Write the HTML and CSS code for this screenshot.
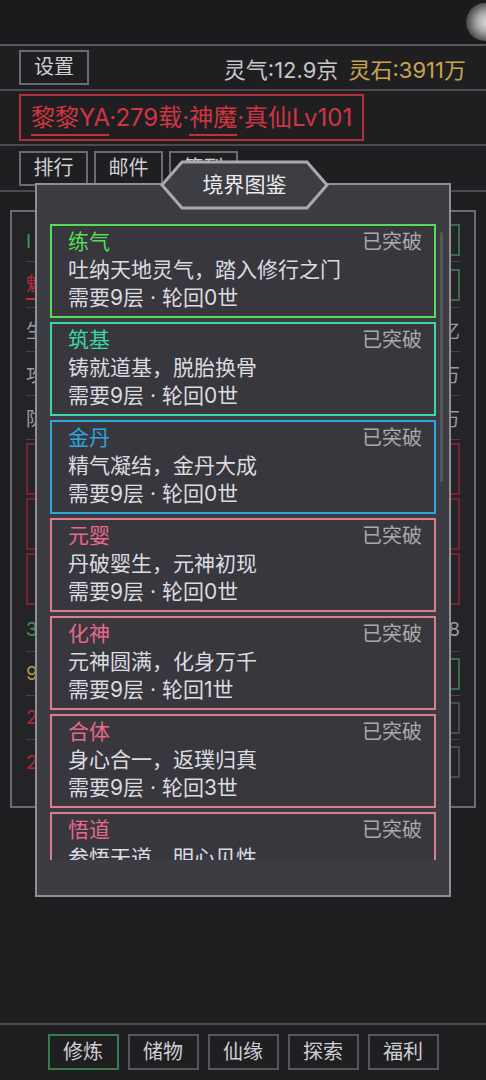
FILE: index.html
```html
<!DOCTYPE html>
<html lang="zh-CN">
<head>
    <meta charset="UTF-8">
    <meta name="viewport" content="width=device-width, initial-scale=1.0">
    <title>境界图鉴</title>
    <link rel="stylesheet" href="styles.css">
</head>
<body>

    <div class="app">
        <!-- Top bar -->
        <div class="topbar">
            <div class="orb"></div>
        </div>

        <!-- Resources -->
        <div class="row res-row">
            <div class="btn">设置</div>
            <div class="res">
                <span class="qi">灵气:12.9京</span>
                <span class="stone">灵石:3911万</span>
            </div>
        </div>

        <!-- Player title -->
        <div class="row name-row">
            <div class="name-box">
                <span class="ul">黎黎YA</span>·279载·<span class="ul">神魔</span>·真仙Lv101
            </div>
        </div>

        <!-- Tabs -->
        <div class="row tab-row">
            <div class="btn">排行</div>
            <div class="btn">邮件</div>
            <div class="btn">签到</div>
        </div>

        <!-- Main panel (behind modal) -->
        <div class="main">
            <div class="panel">
                <div class="prow">
                    <span class="green">I 练气九层</span>
                    <span class="mini-box green-box"></span>
                </div>
                <div class="prow tall">
                    <span class="red ul">魅力</span>
                    <span class="mini-box green-box"></span>
                </div>
                <div class="prow"><span>生命</span><span>12.3亿</span></div>
                <div class="prow"><span>攻击</span><span>45.6万</span></div>
                <div class="prow"><span>防御</span><span>23.1万</span></div>
                <div class="rbox"></div>
                <div class="rbox"></div>
                <div class="rbox"></div>
                <div class="prow"><span class="green">3</span><span>8</span></div>
                <div class="prow"><span class="gold">9</span><span class="mini-box green-box"></span></div>
                <div class="prow"><span class="red">2</span><span class="mini-box"></span></div>
                <div class="prow last"><span class="red">2</span><span class="mini-box"></span></div>
            </div>
        </div>

        <!-- Bottom nav -->
        <div class="nav">
            <div class="btn active">修炼</div>
            <div class="btn">储物</div>
            <div class="btn">仙缘</div>
            <div class="btn">探索</div>
            <div class="btn">福利</div>
        </div>

        <!-- Modal -->
        <div class="modal">
            <div class="modal-title">
                <svg width="169" height="50" viewBox="0 0 169 50">
                    <polygon points="2,25 22,2 147,2 167,25 147,48 22,48" fill="#3d3d44" stroke="#a9a9b1" stroke-width="3"/>
                </svg>
                <span>境界图鉴</span>
            </div>
            <div class="scrollbar"></div>
            <div class="list">
                <div class="card c-green">
                    <div class="card-head"><span class="realm">练气</span><span class="status">已突破</span></div>
                    <div>吐纳天地灵气，踏入修行之门</div>
                    <div>需要9层 · 轮回0世</div>
                </div>
                <div class="card c-teal">
                    <div class="card-head"><span class="realm">筑基</span><span class="status">已突破</span></div>
                    <div>铸就道基，脱胎换骨</div>
                    <div>需要9层 · 轮回0世</div>
                </div>
                <div class="card c-blue">
                    <div class="card-head"><span class="realm">金丹</span><span class="status">已突破</span></div>
                    <div>精气凝结，金丹大成</div>
                    <div>需要9层 · 轮回0世</div>
                </div>
                <div class="card c-pink">
                    <div class="card-head"><span class="realm">元婴</span><span class="status">已突破</span></div>
                    <div>丹破婴生，元神初现</div>
                    <div>需要9层 · 轮回0世</div>
                </div>
                <div class="card c-pink">
                    <div class="card-head"><span class="realm">化神</span><span class="status">已突破</span></div>
                    <div>元神圆满，化身万千</div>
                    <div>需要9层 · 轮回1世</div>
                </div>
                <div class="card c-pink">
                    <div class="card-head"><span class="realm">合体</span><span class="status">已突破</span></div>
                    <div>身心合一，返璞归真</div>
                    <div>需要9层 · 轮回3世</div>
                </div>
                <div class="card c-pink">
                    <div class="card-head"><span class="realm">悟道</span><span class="status">已突破</span></div>
                    <div>参悟天道，明心见性</div>
                    <div>需要9层 · 轮回5世</div>
                </div>
            </div>
        </div>
    </div>

</body>
</html>
```

FILE: styles.css
```css
* {
    box-sizing: border-box;
}

body {
    margin: 0;
    background-color: #1e1e21;
    font-family: Inter, "Noto Sans CJK SC", sans-serif;
    color: #d2d2d6;
}

.app {
    position: relative;
    width: 486px;
    height: 1080px;
    display: flex;
    flex-direction: column;
    overflow: hidden;
}

.topbar {
    position: relative;
    height: 46px;
    background-color: #1b1b1e;
    border-bottom: 2px solid #58585d;
}

.orb {
    position: absolute;
    right: -18px;
    top: 3px;
    width: 38px;
    height: 38px;
    border-radius: 50%;
    background: radial-gradient(circle at 55% 50%, #dcdcdc 0, #a8a8a8 35%, #4a4a4c 72%, #1b1b1e 100%);
}

.row {
    display: flex;
    align-items: center;
    padding: 0 19px;
    border-bottom: 2px solid #4a4a4f;
    background-color: #1f1f22;
}

.btn {
    border: 2px solid #6b6b70;
    color: #cfcfd3;
    font-size: 20px;
    line-height: 30px;
    padding: 0 14px;
    background-color: #1f1f22;
}

.res-row {
    height: 45px;
    justify-content: space-between;
}

.res-row .btn {
    height: 35px;
    width: 70px;
    text-align: center;
    padding: 0;
}

.res {
    font-size: 22px;
    padding-right: 1px;
}

.qi {
    color: #c6c6ca;
}

.stone {
    color: #c9a54a;
    margin-left: 4px;
}

.name-row {
    height: 55px;
}

.name-box {
    border: 2px solid #b3303a;
    color: #cf3540;
    font-size: 24px;
    line-height: 43px;
    height: 47px;
    padding: 0 10px;
}

.ul {
    border-bottom: 2px solid #c3303a;
    padding-bottom: 2px;
}

.tab-row {
    height: 46px;
    gap: 6px;
    align-items: flex-start;
    padding-top: 5px;
}

.tab-row .btn {
    height: 35px;
    width: 69px;
    text-align: center;
    padding: 0;
}

.main {
    flex: 1;
    padding: 18px 10px 0;
}

.panel {
    height: 598px;
    border: 2px solid #6a6a6f;
    background-color: #242428;
    padding: 6px 14px;
    color: #9b9ba0;
    font-size: 19px;
}

.prow {
    height: 44px;
    display: flex;
    align-items: center;
    justify-content: space-between;
    border-bottom: 1px solid #444449;
}

.prow.tall {
    height: 46px;
}

.prow.last {
    border-bottom: none;
}

.mini-box {
    width: 30px;
    height: 32px;
    border: 2px solid #4a4a50;
}

.green-box {
    border-color: #3c6a48;
}

.green {
    color: #3f9a55;
}

.red {
    color: #b52a36;
}

.gold {
    color: #b79a3a;
}

.rbox {
    height: 52px;
    margin: 3px 0;
    border: 2px solid #7a2030;
}

.nav {
    height: 57px;
    border-top: 2px solid #4a4a4f;
    background-color: #1f1f22;
    display: flex;
    justify-content: center;
    gap: 9px;
    padding-top: 9px;
}

.nav .btn {
    height: 36px;
    width: 71px;
    text-align: center;
    padding: 0;
    line-height: 32px;
    border-color: #555559;
}

.nav .btn.active {
    border-color: #3a7a4c;
}

/* Modal */
.modal {
    position: absolute;
    left: 35px;
    top: 183px;
    width: 416px;
    height: 714px;
    border: 2px solid #8f8f95;
    background-color: #3c3c43;
}

.modal-title {
    position: absolute;
    left: 123px;
    top: -25px;
    width: 169px;
    height: 50px;
}

.modal-title svg {
    position: absolute;
    left: 0;
    top: 0;
}

.modal-title span {
    position: relative;
    display: block;
    text-align: center;
    line-height: 50px;
    font-size: 21px;
    color: #ececef;
}

.scrollbar {
    position: absolute;
    left: 403px;
    top: 47px;
    width: 3px;
    height: 250px;
    background-color: #56565c;
    border-radius: 2px;
}

.list {
    margin: 39px 13px 0;
    height: 636px;
    overflow: hidden;
    display: flex;
    flex-direction: column;
    gap: 4px;
}

.card {
    flex-shrink: 0;
    height: 94px;
    border: 2px solid;
    background-color: #37373d;
    padding: 2px 12px 0 16px;
    font-size: 21px;
    line-height: 28px;
    color: #dcdce0;
}

.card-head {
    display: flex;
    justify-content: space-between;
}

.status {
    color: #a9a9ae;
    font-size: 20px;
}

.c-green {
    border-color: #55dd55;
}

.c-green .realm {
    color: #55dd55;
}

.c-teal {
    border-color: #3ed6a4;
}

.c-teal .realm {
    color: #3ed6a4;
}

.c-blue {
    border-color: #2fa6de;
}

.c-blue .realm {
    color: #2fa6de;
}

.c-pink {
    border-color: #e07a92;
}

.c-pink .realm {
    color: #e8688a;
}
```
